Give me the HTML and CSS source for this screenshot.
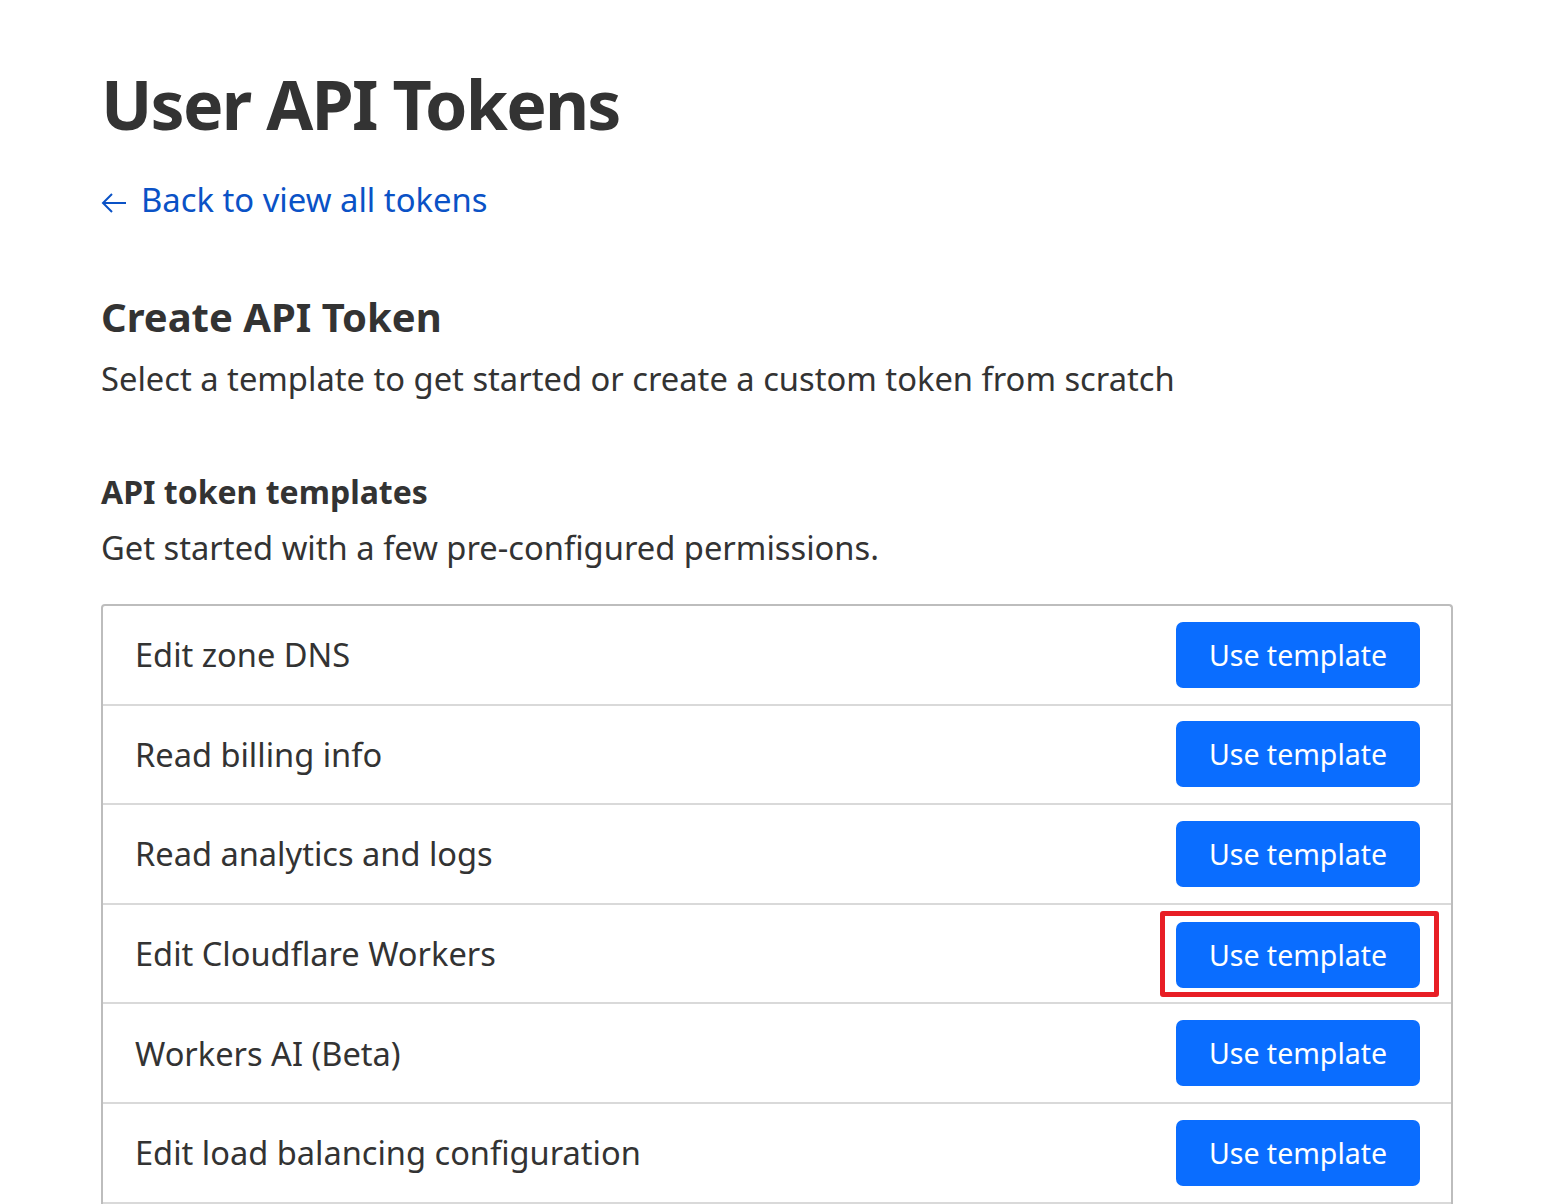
FILE: index.html
```html
<!DOCTYPE html>
<html lang="en">
<head>
<meta charset="utf-8">
<title>User API Tokens</title>
<link rel="stylesheet" href="styles.css">
</head>
<body>
<main class="page">
  <h1 class="title">User API Tokens</h1>
  <a class="back" href="#">
    <svg class="back-arrow" viewBox="0 0 26 20" width="26" height="20" aria-hidden="true">
      <path d="M25 10H2M11 1L2 10l9 9" fill="none" stroke="currentColor" stroke-width="2"/>
    </svg>
    <span>Back to view all tokens</span>
  </a>
  <section class="create">
    <h2 class="h2">Create API Token</h2>
    <p class="lead lead-create">Select a template to get started or create a custom token from scratch</p>
  </section>
  <section class="templates">
    <h3 class="h3">API token templates</h3>
    <p class="lead lead-templates">Get started with a few pre-configured permissions.</p>
    <div class="table">
      <div class="row"><span class="name">Edit zone DNS</span><button class="btn">Use template</button></div>
      <div class="row"><span class="name">Read billing info</span><button class="btn">Use template</button></div>
      <div class="row"><span class="name">Read analytics and logs</span><button class="btn">Use template</button></div>
      <div class="row"><span class="name">Edit Cloudflare Workers</span><span class="highlight"><button class="btn">Use template</button></span></div>
      <div class="row"><span class="name">Workers AI (Beta)</span><button class="btn">Use template</button></div>
      <div class="row"><span class="name">Edit load balancing configuration</span><button class="btn">Use template</button></div>
    </div>
  </section>
</main>
</body>
</html>
```

FILE: styles.css
```css
* { box-sizing: border-box; }
html, body { margin: 0; padding: 0; background: #fff; }
body {
  font-family: "Noto Sans", "Open Sans", sans-serif;
  color: #333;
}
.page {
  padding: 56px 106px 0 101px;
  display: flex;
  flex-direction: column;
}
.title {
  margin: 0;
  font-size: 68px;
  font-weight: 700;
  line-height: 96px;
  letter-spacing: -1.8px;
}
.back {
  margin-top: 26px;
  display: inline-flex;
  align-items: center;
  gap: 14px;
  color: #0a52c6;
  text-decoration: none;
  font-size: 32.8px;
  line-height: 44px;
  align-self: flex-start;
}
.back-arrow { margin-top: 6px; }
.create { margin-top: 67px; }
.h2 {
  margin: 0;
  font-size: 40px;
  font-weight: 700;
  line-height: 56px;
}
.lead {
  margin: 0;
  font-size: 32.7px;
  line-height: 52px;
}
.lead-create { margin-top: 8px; }
.lead-templates { margin-top: 5px; }
.templates { margin-top: 62px; }
.h3 {
  margin: 0;
  font-size: 32px;
  font-weight: 700;
  line-height: 50px;
}
.table {
  margin-top: 30px;
  border: 2px solid #bdbdbd;
  border-bottom: none;
  border-radius: 4px 4px 0 0;
}
.row {
  display: flex;
  align-items: center;
  justify-content: space-between;
  height: 99.6px;
  padding: 0 31px 0 32px;
  border-bottom: 2px solid #d9d9d9;
}
.name { font-size: 32.6px; }
.btn {
  font-family: inherit;
  width: 244px;
  height: 66px;
  border: none;
  border-radius: 7px;
  background: #0a6dff;
  color: #fff;
  font-size: 28.5px;
  padding: 0;
  cursor: pointer;
}
.highlight {
  display: inline-flex;
  margin-right: -19px;
  padding: 6px 14px 4px 11px;
  border: 5px solid #e81e25;
  border-radius: 3px;
}
```
